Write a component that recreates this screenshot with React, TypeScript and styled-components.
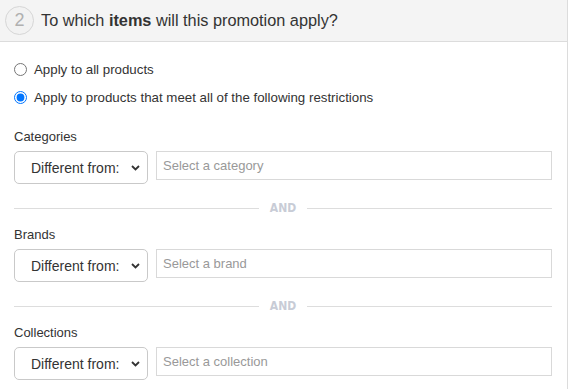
import styled, { createGlobalStyle } from 'styled-components'

const Global = createGlobalStyle`
  body {
    margin: 0;
    background: #fff;
    font-family: "Liberation Sans", Arial, sans-serif;
    color: #333;
  }
`

const sections = [
  { label: 'Categories', placeholder: 'Select a category' },
  { label: 'Brands', placeholder: 'Select a brand' },
  { label: 'Collections', placeholder: 'Select a collection' },
]

function Chevron() {
  return (
    <svg width="9" height="6" viewBox="0 0 9 6">
      <path d="M1 1l3.5 3.5L8 1" fill="none" stroke="#333" strokeWidth="1.8" />
    </svg>
  )
}

function App() {
  return (
    <>
      <Global />
      <Panel>
        <Header>
          <StepNumber>2</StepNumber>
          <Title>
            To which <b>items</b> will this promotion apply?
          </Title>
        </Header>
        <Body>
          <RadioRow>
            <Radio type="radio" name="scope" />
            Apply to all products
          </RadioRow>
          <RadioRow>
            <Radio type="radio" name="scope" defaultChecked />
            Apply to products that meet all of the following restrictions
          </RadioRow>
          {sections.map((s, i) => (
            <div key={s.label}>
              {i > 0 && (
                <Divider>
                  <span>AND</span>
                </Divider>
              )}
              <Section first={i === 0}>
                <Label>{s.label}</Label>
                <FieldRow>
                  <SelectBox>
                    <span>Different from:</span>
                    <Chevron />
                  </SelectBox>
                  <TextInput placeholder={s.placeholder} />
                </FieldRow>
              </Section>
            </div>
          ))}
        </Body>
      </Panel>
    </>
  )
}

const Panel = styled.div`
  width: 568px;
  height: 389px;
  box-sizing: border-box;
  border-right: 1px solid #dcdcdc;
  overflow: hidden;
`

const Header = styled.div`
  height: 41px;
  background: #f4f4f4;
  border-bottom: 1px solid #dcdcdc;
  display: flex;
  align-items: center;
  padding-left: 5px;
  gap: 7px;
  box-sizing: content-box;
`

const StepNumber = styled.div`
  width: 27px;
  height: 27px;
  border: 1px solid #d6d6d6;
  border-radius: 50%;
  display: flex;
  align-items: center;
  justify-content: center;
  font-size: 18px;
  color: #b0b0b0;
  background: #f2f2f2;
`

const Title = styled.div`
  font-size: 16.3px;
  color: #333;
  b {
    font-weight: 700;
  }
`

const Body = styled.div`
  padding: 13px 15px 0 14px;
`

const RadioRow = styled.label`
  display: flex;
  align-items: center;
  height: 28px;
  font-size: 13.3px;
  color: #333;
`

const Radio = styled.input`
  width: 13px;
  height: 13px;
  margin: 0 7px 0 0;
`

const Section = styled.div<{ first?: boolean }>`
  margin-top: ${(p) => (p.first ? '18px' : '11px')};
`

const Label = styled.div`
  font-size: 13px;
  line-height: 16px;
  color: #333;
  margin-bottom: 6px;
`

const FieldRow = styled.div`
  display: flex;
  align-items: flex-start;
  gap: 8px;
`

const SelectBox = styled.div`
  width: 134px;
  height: 33px;
  box-sizing: border-box;
  border: 1px solid #c9c9c9;
  border-radius: 5px;
  background: #fff;
  display: flex;
  align-items: center;
  justify-content: space-between;
  padding: 0 7px 0 16px;
  font-size: 14px;
  color: #333;
  svg {
    margin-top: 1px;
  }
`

const TextInput = styled.input`
  flex: 1;
  height: 29px;
  box-sizing: border-box;
  border: 1px solid #d9d9d9;
  border-radius: 0;
  padding: 0 6px;
  font-family: "Liberation Sans", Arial, sans-serif;
  font-size: 13px;
  color: #333;
  outline: none;
  &::placeholder {
    color: #999;
  }
`

const Divider = styled.div`
  display: flex;
  align-items: center;
  gap: 11px;
  margin-top: 16px;
  height: 16px;
  &::before,
  &::after {
    content: "";
    flex: 1;
    height: 1px;
    background: #dddddd;
  }
  span {
    font-family: "Liberation Sans Narrow", "DejaVu Sans Condensed", sans-serif;
    font-weight: 700;
    font-size: 12px;
    color: #c8ccd6;
  }
`

export default App
